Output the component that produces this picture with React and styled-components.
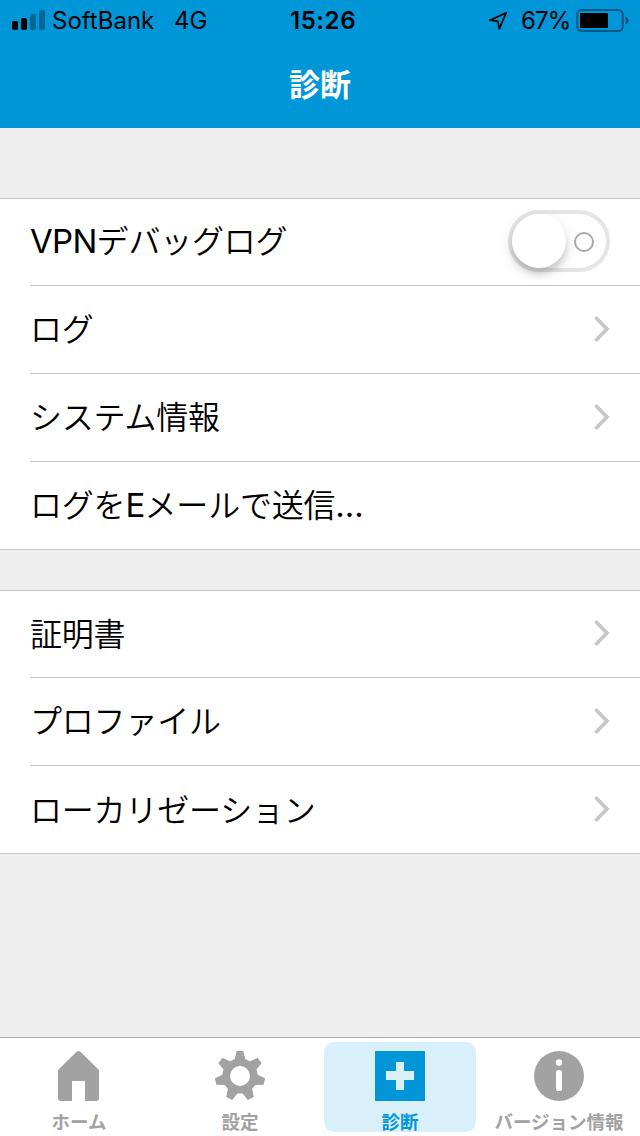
import React from "react";
import styled, { createGlobalStyle } from "styled-components";

const App = () => {
  return (
    <Screen>
      <GlobalStyle />
      <Header>
        <StatusBar>
          <Carrier>
            <SignalIcon />
            <CarrierName>SoftBank</CarrierName>
            <Network>4G</Network>
          </Carrier>
          <Clock>15:26</Clock>
          <Power>
            <LocationIcon />
            <Percent>67%</Percent>
            <BatteryIcon />
          </Power>
        </StatusBar>
        <Title>診断</Title>
      </Header>
      <Content>
        <Group>
          <Row>
            <Label>
              <Latin>VPN</Latin>デバッグログ
            </Label>
            <Toggle role="switch" aria-checked="false">
              <Knob />
              <Ring />
            </Toggle>
          </Row>
          <Row>
            <Label>ログ</Label>
            <Chevron />
          </Row>
          <Row>
            <Label>システム情報</Label>
            <Chevron />
          </Row>
          <Row>
            <Label>
              ログを<Latin>E</Latin>メールで送信<Dots>...</Dots>
            </Label>
          </Row>
        </Group>
        <Group>
          <Row>
            <Label>証明書</Label>
            <Chevron />
          </Row>
          <Row>
            <Label>プロファイル</Label>
            <Chevron />
          </Row>
          <Row>
            <Label>ローカリゼーション</Label>
            <Chevron />
          </Row>
        </Group>
      </Content>
      <TabBar>
        <Tab>
          <HomeIcon />
          <TabLabel>ホーム</TabLabel>
        </Tab>
        <Tab>
          <GearIcon />
          <TabLabel>設定</TabLabel>
        </Tab>
        <Tab $active>
          <PlusIcon />
          <TabLabel>診断</TabLabel>
        </Tab>
        <Tab>
          <InfoIcon />
          <TabLabel>バージョン情報</TabLabel>
        </Tab>
      </TabBar>
    </Screen>
  );
};

const SignalIcon = () => (
  <svg width="33" height="20" viewBox="0 0 33 20">
    <rect x="0" y="11" width="6" height="9" rx="1.8" />
    <rect x="9" y="8" width="6" height="12" rx="1.8" />
    <rect x="18" y="4" width="6" height="16" rx="1.8" opacity="0.3" />
    <rect x="27" y="0" width="6" height="20" rx="1.8" opacity="0.3" />
  </svg>
);

const LocationIcon = () => (
  <svg width="20" height="20" viewBox="0 0 20 20">
    <path
      d="M1.8 10.2 L18.2 2.9 L11.2 18.8 L9.9 11.2 Z"
      fill="none"
      stroke="#000"
      strokeWidth="1.7"
      strokeLinejoin="round"
    />
  </svg>
);

const BatteryIcon = () => (
  <svg width="54" height="24" viewBox="0 0 54 24">
    <rect
      x="1.2"
      y="2"
      width="45.6"
      height="21"
      rx="4.5"
      fill="none"
      stroke="#000"
      strokeOpacity="0.4"
      strokeWidth="2"
    />
    <rect x="4" y="5" width="28" height="15" rx="1" />
    <path d="M49.6 8.5 C53.4 9.8 53.4 15.2 49.6 16.5 Z" opacity="0.5" />
  </svg>
);

const Chevron = () => (
  <svg width="18" height="28" viewBox="0 0 18 28">
    <path
      d="M3.5 2.2 L15 14 L3.5 25.8"
      fill="none"
      stroke="#c7c7cc"
      strokeWidth="3.7"
    />
  </svg>
);

const HomeIcon = () => (
  <svg width="50" height="50" viewBox="0 0 50 50">
    <path
      d="M22.5 0.7 Q24.5 -0.7 26.5 0.7 L45 19 V47 Q45 50 42 50 H31 V30 H18 V50 H7 Q4 50 4 47 V19 Z"
      fill="currentColor"
    />
  </svg>
);

const GearIcon = () => (
  <svg width="50" height="50" viewBox="0 0 50 50">
    <g fill="currentColor">
      <circle cx="25" cy="25" r="13.8" fill="none" stroke="currentColor" strokeWidth="7.6" />
      {[0, 1, 2, 3, 4, 5, 6].map((n) => (
        <path
          key={n}
          d="M21.7 0 H28.3 L30.4 8.6 L33 11 H17 L19.6 8.6 Z"
          transform={`rotate(${(n * 360) / 7} 25 25)`}
        />
      ))}
    </g>
  </svg>
);

const PlusIcon = () => (
  <svg width="50" height="50" viewBox="0 0 50 50">
    <path
      d="M0 0 H50 V50 H0 Z M21 11 V20 H11 V29 H21 V39 H29 V29 H39 V20 H29 V11 Z"
      fill="currentColor"
      fillRule="evenodd"
    />
  </svg>
);

const InfoIcon = () => (
  <svg width="50" height="50" viewBox="0 0 50 50">
    <circle cx="25" cy="25" r="25" fill="currentColor" />
    <circle cx="25" cy="11.5" r="3.2" fill="#fff" />
    <rect x="22" y="19" width="6" height="21" rx="2.6" fill="#fff" />
  </svg>
);

const GlobalStyle = createGlobalStyle`
  * {
    box-sizing: border-box;
  }
  body {
    margin: 0;
    font-family: "Inter", "Noto Sans CJK JP", sans-serif;
    color: #000;
  }
  svg {
    display: block;
    flex-shrink: 0;
  }
`;

const Screen = styled.div`
  width: 640px;
  height: 1136px;
  display: flex;
  flex-direction: column;
  overflow: hidden;
  background-color: #eeeeee;
`;

const Header = styled.header`
  height: 128px;
  background-color: #0096d8;
`;

const StatusBar = styled.div`
  height: 40px;
  display: grid;
  grid-template-columns: 1fr auto 1fr;
  align-items: center;
  padding: 0 10px 0 12px;
  font-size: 24px;
  line-height: 38px;
  white-space: nowrap;
  span {
    padding-top: 2px;
  }
`;

const Carrier = styled.div`
  display: flex;
  align-items: center;
`;

const CarrierName = styled.span`
  width: 122px;
  padding-left: 7px;
`;

const Network = styled.span`
  padding-left: 7px;
`;

const Clock = styled.span`
  font-weight: 600;
  letter-spacing: 0.6px;
  padding-left: 4px;
`;

const Power = styled.div`
  display: flex;
  align-items: center;
  justify-content: flex-end;
`;

const Percent = styled.span`
  width: 61px;
  padding-left: 13px;
  margin-right: 7px;
  letter-spacing: -0.9px;
`;

const Title = styled.h1`
  margin: 0;
  text-align: center;
  color: #fff;
  font-family: "Noto Sans CJK JP", sans-serif;
  font-size: 31px;
  font-weight: 700;
  line-height: 85px;
`;

const Content = styled.main`
  flex: 1;
  display: flex;
  flex-direction: column;
  gap: 40px;
  padding-top: 70px;
`;

const Group = styled.section`
  padding-left: 30px;
  background-color: #fff;
  border-top: 1px solid #c8c8c8;
  border-bottom: 1px solid #c8c8c8;
`;

const Row = styled.div`
  height: 88px;
  display: flex;
  align-items: center;
  justify-content: space-between;
  padding: 0 30px 2px 0;
  border-bottom: 1px solid #c8c8c8;
  &:first-child {
    height: 87px;
  }
  &:last-child {
    height: 87px;
    padding-bottom: 1px;
    border-bottom: none;
  }
`;

const Label = styled.span`
  padding-bottom: 3px;
  font-family: "Noto Sans CJK JP", sans-serif;
  font-size: 32px;
  font-weight: 350;
  line-height: 48px;
  letter-spacing: -0.2px;
  white-space: nowrap;
`;

const Latin = styled.span`
  font-family: "Inter", sans-serif;
  font-size: 33px;
  font-weight: 400;
  letter-spacing: -0.7px;
`;

const Dots = styled(Latin)`
  letter-spacing: 0;
`;

const Toggle = styled.div`
  width: 102px;
  height: 62px;
  display: flex;
  align-items: center;
  justify-content: space-between;
  padding-right: 12px;
  border: 4px solid #e5e5e5;
  border-radius: 31px;
`;

const Knob = styled.span`
  width: 54px;
  height: 54px;
  border-radius: 50%;
  background-color: #fff;
  box-shadow: 0 6px 6px rgba(0, 0, 0, 0.14), 0 5px 16px rgba(0, 0, 0, 0.12);
`;

const Ring = styled.span`
  width: 20px;
  height: 20px;
  margin-top: 2px;
  border: 2px solid #a8a8a8;
  border-radius: 50%;
`;

const TabBar = styled.nav`
  height: 99px;
  display: grid;
  grid-template-columns: repeat(4, 152px);
  column-gap: 8px;
  padding: 4px 4px;
  background-color: #fff;
  border-top: 1px solid #a8a8a8;
`;

const Tab = styled.a`
  height: 90px;
  display: flex;
  flex-direction: column;
  align-items: center;
  padding-top: 9px;
  border-radius: 10px;
  color: ${(props) => (props.$active ? "#0096d8" : "#a2a2a2")};
  background-color: ${(props) => (props.$active ? "#d9effa" : "transparent")};
  &:first-child,
  &:last-child {
    padding-right: 2px;
  }
`;

const TabLabel = styled.span`
  margin-top: 7px;
  font-family: "Noto Sans CJK JP", sans-serif;
  font-size: 18.5px;
  font-weight: 600;
  line-height: 26px;
  white-space: nowrap;
`;

export default App;
